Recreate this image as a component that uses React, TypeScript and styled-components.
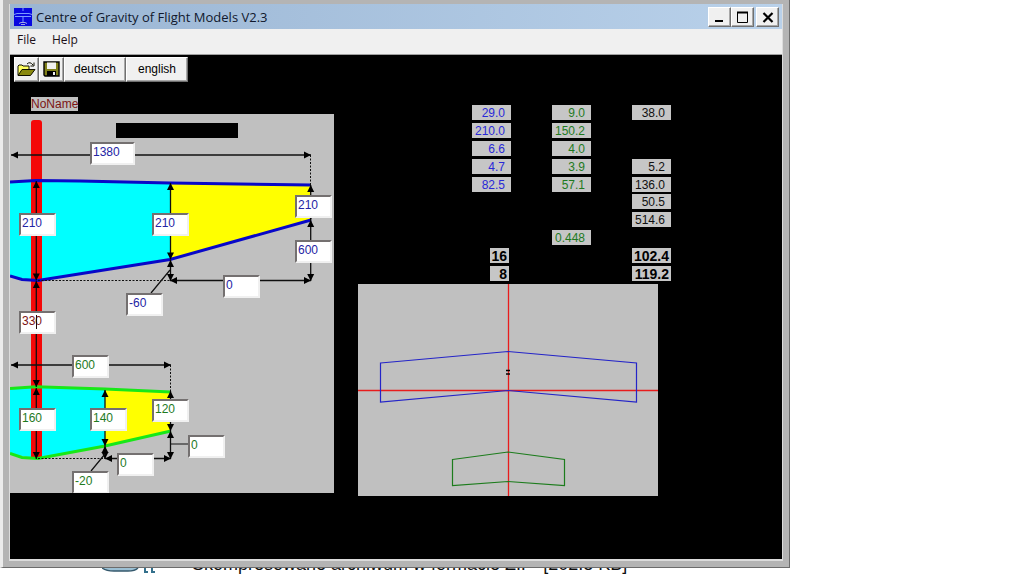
import React from 'react';
import styled, { createGlobalStyle, css } from 'styled-components';

const GlobalStyle = createGlobalStyle`
  * { box-sizing: border-box; }
  body {
    margin: 0;
    background: #ffffff;
    font-family: "Liberation Sans", Arial, sans-serif;
    font-size: 12px;
    overflow-x: hidden;
  }
`;

const palette = {
  blue: '#2424a4',
  brightBlue: '#2828d8',
  green: '#1e7a1e',
  maroon: '#7c1414',
  black: '#000000',
  panel: '#c0c0c0',
};

const Desktop = styled.div`
  display: flex;
  flex-direction: column;
  align-items: stretch;
`;

const Window = styled.main`
  width: calc(100% - 234px);
  min-width: 700px;
  padding: 4px 6px 6px;
  background: #b4b4b4;
  border: 0 solid #6c6c6c;
  border-width: 0 1px 1px 3px;
  border-left-color: #ececec;
`;

const WindowInner = styled.div`
  border: 1px solid #dcdcdc;
  border-top-width: 0;
  border-bottom-width: 2px;
`;

const TitleBar = styled.header`
  display: flex;
  align-items: center;
  height: 25px;
  padding: 0 3px 0 4px;
  background: linear-gradient(90deg, #9ab5d3, #b9d1ea);
`;

const Title = styled.h1`
  flex: 1;
  margin: 0 0 0 4px;
  font: 400 13px/20px "Open Sans", "Noto Sans", sans-serif;
  color: #10182c;
  white-space: nowrap;
`;

const raised = css`
  border: 1px solid;
  border-color: #ffffff #707070 #707070 #ffffff;
  box-shadow: inset -1px -1px 0 #a8a8a8;
  background: #f0f0f0;
`;

const CaptionButtons = styled.div`
  display: flex;
`;

const CaptionButton = styled.button<{ $apart?: boolean }>`
  ${raised}
  display: grid;
  place-items: center;
  width: 23px;
  height: 20px;
  padding: 0;
  margin-left: ${p => (p.$apart ? '2px' : '0')};
`;

const MenuBar = styled.nav`
  display: flex;
  gap: 2px;
  height: 26px;
  padding: 0 0 3px;
  background: #f0f0f0;
  border-bottom: 1px solid #a0a0a0;
`;

const MenuItem = styled.button`
  border: 0;
  padding: 0 7px;
  background: transparent;
  color: #1c1018;
  font: 400 12px/20px "Open Sans", "Noto Sans", sans-serif;
`;

const Client = styled.div`
  display: grid;
  grid-template-columns: 348px 1fr;
  align-items: start;
  min-height: 504px;
  background: #000000;
`;

const Planform = styled.section`
  display: flex;
  flex-direction: column;
  align-items: flex-start;
  padding-top: 2px;
`;

const Toolbar = styled.div`
  display: flex;
  margin-left: 4px;
`;

const ToolButton = styled.button<{ $wide?: boolean }>`
  ${raised}
  display: grid;
  place-items: center;
  width: ${p => (p.$wide ? '62px' : '25px')};
  height: 25px;
  padding: 0 0 1px;
  color: #000000;
  font: 400 12px/16px "Liberation Sans", Arial, sans-serif;
`;

const ModelName = styled.span`
  margin: 15px 0 3px 21px;
  height: 14px;
  line-height: 15px;
  background: ${palette.panel};
  color: ${palette.maroon};
`;

const DrawingPanel = styled.div`
  position: relative;
  width: 324px;
  height: 379px;
  background: ${palette.panel};
  overflow: hidden;
`;

const Drawing = styled.svg`
  display: block;
`;

const FieldBox = styled.label<{ $x: number; $y: number; $struck?: boolean }>`
  position: absolute;
  left: ${p => p.$x}px;
  top: ${p => p.$y}px;
  ${p => p.$struck && css`
    &::after {
      content: '';
      position: absolute;
      left: 17px;
      top: 4px;
      width: 1px;
      height: 14px;
      background: #200808;
    }
  `}
`;

const FieldInput = styled.input<{ $wide?: boolean; $color: string }>`
  display: block;
  width: ${p => (p.$wide ? '45px' : '37px')};
  height: 23px;
  padding: 0 0 3px 1px;
  border: 2px solid;
  border-color: #747070 #f0f0f0 #f0f0f0 #747070;
  border-radius: 0;
  background: #ffffff;
  color: ${p => p.$color};
  font: 400 12px/16px "Liberation Sans", Arial, sans-serif;
`;

const Results = styled.section`
  display: flex;
  flex-direction: column;
  align-items: flex-start;
  padding-top: 50px;
`;

const ResultTable = styled.table`
  width: 199px;
  height: 179px;
  margin-left: 114px;
  table-layout: fixed;
  border-collapse: collapse;
`;

const ResultCell = styled.td<{ $last?: boolean }>`
  width: ${p => (p.$last ? '39px' : '80px')};
  padding: 0;
  vertical-align: top;
`;

const Value = styled.span<{ $color: string; $bold?: boolean; $short?: boolean }>`
  display: block;
  width: ${p => (p.$short ? '19px' : '39px')};
  height: 15px;
  margin-left: ${p => (p.$short ? '18px' : '0')};
  padding-right: ${p => (p.$bold ? '2px' : '6px')};
  background: #c6c6c6;
  color: ${p => p.$color};
  font-size: ${p => (p.$bold ? '14px' : '12px')};
  font-weight: ${p => (p.$bold ? 700 : 400)};
  line-height: 16px;
  text-align: right;
`;

const PlanView = styled.div`
  width: 300px;
  height: 212px;
  background: ${palette.panel};
`;

const PageBehind = styled.footer`
  display: flex;
  align-items: flex-end;
  height: 8px;
  padding-left: 102px;
  overflow: hidden;
`;

const ArchiveNote = styled.p`
  margin: 0 0 0 34px;
  color: #101010;
  font: 400 18px/24px "Liberation Sans", Arial, sans-serif;
  white-space: nowrap;
`;

type Dir = 'up' | 'down' | 'left' | 'right';

function Head({ x, y, dir }: { x: number; y: number; dir: Dir }) {
  const turn = { up: 0, right: 90, down: 180, left: 270 }[dir];
  return <path d="M0 0 L3.5 7 H-3.5 Z" transform={`translate(${x} ${y}) rotate(${turn})`} />;
}

function Dimension({ x1, y1, x2, y2 }: { x1: number; y1: number; x2: number; y2: number }) {
  const vertical = x1 === x2;
  return (
    <g>
      <path d={`M${x1} ${y1} L${x2} ${y2}`} stroke="#101010" strokeWidth="1.3" />
      <Head x={x1} y={y1} dir={vertical ? 'up' : 'left'} />
      <Head x={x2} y={y2} dir={vertical ? 'down' : 'right'} />
    </g>
  );
}

interface FieldSpec {
  label: string;
  value: string;
  x: number;
  y: number;
  color: string;
  wide?: boolean;
  struck?: boolean;
}

const fields: FieldSpec[] = [
  { label: 'Wing span', value: '1380', x: 80, y: 28, color: palette.blue, wide: true },
  { label: 'Wing root chord', value: '210', x: 9, y: 99, color: palette.blue },
  { label: 'Wing middle chord', value: '210', x: 142, y: 99, color: palette.blue },
  { label: 'Wing tip chord', value: '210', x: 285, y: 81, color: palette.blue },
  { label: 'Wing tip sweep', value: '600', x: 285, y: 126, color: palette.blue },
  { label: 'Outer wing panel', value: '0', x: 213, y: 161, color: palette.blue },
  { label: 'Wing middle sweep', value: '-60', x: 116, y: 179, color: palette.blue },
  { label: 'Tail distance', value: '330', x: 9, y: 197, color: palette.maroon, struck: true },
  { label: 'Tail span', value: '600', x: 62, y: 241, color: palette.green },
  { label: 'Tail root chord', value: '160', x: 9, y: 294, color: palette.green },
  { label: 'Tail middle chord', value: '140', x: 80, y: 294, color: palette.green },
  { label: 'Tail tip chord', value: '120', x: 142, y: 285, color: palette.green },
  { label: 'Tail tip sweep', value: '0', x: 178, y: 321, color: palette.green },
  { label: 'Outer tail panel', value: '0', x: 107, y: 339, color: palette.green },
  { label: 'Tail middle sweep', value: '-20', x: 62, y: 357, color: palette.green },
];

type Row = [string, string, string];

const rows: Row[] = [
  ['29.0', '9.0', '38.0'],
  ['210.0', '150.2', ''],
  ['6.6', '4.0', ''],
  ['4.7', '3.9', '5.2'],
  ['82.5', '57.1', '136.0'],
  ['', '', '50.5'],
  ['', '', '514.6'],
  ['', '0.448', ''],
  ['16', '', '102.4'],
  ['8', '', '119.2'],
];

const columnColors = [palette.brightBlue, palette.green, '#101010'];

function AppIcon() {
  return (
    <svg width="18" height="18" viewBox="0 0 18 18" aria-hidden="true">
      <rect width="18" height="18" fill="#0808e0" />
      <path d="M0 6.5 L3 5.5 H15 L18 6.5 M1 8.5 H17 M9 0 V3 M9 8 V15" fill="none" stroke="#7c9cff" />
      <path d="M5 15.5 L7 14.5 H11 L13 15.5 M7 16.5 H11" fill="none" stroke="#a0a8e0" />
    </svg>
  );
}

function OpenIcon() {
  return (
    <svg width="19" height="16" viewBox="0 0 19 16" aria-hidden="true">
      <path d="M1 14 V5 L2 4 H5 L6 5 H12 V8" fill="#ffff60" stroke="#101000" />
      <path d="M1 14.5 L5 8.5 H18 L13.5 14.5 Z" fill="#8a8a10" stroke="#101000" />
      <path d="M10 3 Q13 0 16 4 M17 1.5 V5 H13.5" fill="none" stroke="#101000" />
    </svg>
  );
}

function SaveIcon() {
  return (
    <svg width="17" height="16" viewBox="0 0 17 16" aria-hidden="true">
      <path d="M1 1 H16 V15 H2 L1 14 Z" fill="#80801a" stroke="#000000" strokeWidth="1.4" />
      <rect x="4" y="1.5" width="9" height="6.5" fill="#f0f0f0" />
      <rect x="4" y="10" width="9" height="5" fill="#000000" />
      <rect x="10" y="11" width="2" height="3" fill="#f0f0f0" />
    </svg>
  );
}

function PlanformDrawing() {
  return (
    <Drawing width="325" height="379" viewBox="10 114 325 379" aria-hidden="true">
      <path d="M10 182 L36 181 L170 183 V260 L36 281 L10 276 Z" fill="#00ffff" />
      <path d="M170 183 L311 185 V220 L170 260 Z" fill="#ffff00" />
      <path d="M10 388 L36 387 L105 389 V446 L36 458 L10 454 Z" fill="#00ffff" />
      <path d="M105 389 L171 392 V431 L105 446 Z" fill="#ffff00" />
      <path d="M31 458 V123 Q31 120 34 120 H39 Q42 120 42 123 V458 Z" fill="#f40808" />
      <rect x="116" y="123" width="122" height="15" />
      <g fill="none" strokeWidth="3">
        <path d="M10 182 L36 180.5 L80 181 L170 183 L311 185" stroke="#0808c8" />
        <path d="M10 276 L22 279.5 L38 280.5 L170 259.5 L311 220" stroke="#0808c8" />
        <path d="M10 388.5 L36 386.8 L105 389 L171 392" stroke="#18e818" />
        <path d="M10 453.5 L22 457.5 L38 458.5 L105 446 L171 431" stroke="#18e818" />
      </g>
      <g fill="none" stroke="#101010" strokeDasharray="2 1.5">
        <path d="M38 280.5 H170" />
        <path d="M310.5 155 V185" />
        <path d="M38 458.5 H105" />
        <path d="M170.5 365 V391" />
      </g>
      <Dimension x1={11} y1={155} x2={311} y2={155} />
      <Dimension x1={170} y1={280.5} x2={311} y2={280.5} />
      <Dimension x1={36.3} y1={181} x2={36.3} y2={280.5} />
      <Dimension x1={170.5} y1={183} x2={170.5} y2={259.5} />
      <Dimension x1={170.5} y1={260} x2={170.5} y2={281} />
      <Dimension x1={310.7} y1={185} x2={310.7} y2={220} />
      <Dimension x1={310.7} y1={220} x2={310.7} y2={281} />
      <Dimension x1={36.3} y1={281} x2={36.3} y2={387} />
      <Dimension x1={36.3} y1={388} x2={36.3} y2={459} />
      <Dimension x1={11} y1={365} x2={171} y2={365} />
      <Dimension x1={105} y1={390} x2={105} y2={446} />
      <Dimension x1={105} y1={446} x2={105} y2={459} />
      <Dimension x1={105} y1={458.5} x2={171} y2={458.5} />
      <Dimension x1={170.5} y1={391} x2={170.5} y2={431} />
      <Dimension x1={170.5} y1={431} x2={170.5} y2={459} />
      <path d="M151 293 L170 270 M91 471 L105 454 M171 444 H188" fill="none" stroke="#101010" strokeWidth="1.2" />
    </Drawing>
  );
}

function PlanViewDrawing() {
  return (
    <Drawing width="300" height="212" viewBox="0 0 300 212" role="img" aria-label="Plan view with centre of gravity">
      <path d="M0 106.5 H300 M150.5 0 V212" stroke="#e81c1c" strokeWidth="1.3" />
      <g fill="none" strokeWidth="1.2">
        <path d="M22.5 79 L150 67.5 L278.5 79 V118 L150 106.5 L22.5 118 Z" stroke="#2424c8" />
        <path d="M94.5 175.5 L150 168 L206.5 175.5 V201.5 L150 197.5 L94.5 201.5 Z" stroke="#1c7c1c" />
      </g>
      <path d="M148 86.5 H152 M148 90 H152" stroke="#000000" strokeWidth="1.3" />
    </Drawing>
  );
}

export default function App() {
  return (
    <Desktop>
      <GlobalStyle />
      <Window>
        <WindowInner>
          <TitleBar>
            <AppIcon />
            <Title>Centre of Gravity of Flight Models V2.3</Title>
            <CaptionButtons>
              <CaptionButton aria-label="Minimize">
                <svg width="13" height="12" viewBox="0 0 13 12"><path d="M2 10 H10" stroke="#000" strokeWidth="2" /></svg>
              </CaptionButton>
              <CaptionButton aria-label="Maximize">
                <svg width="13" height="12" viewBox="0 0 13 12"><path d="M1 1.5 H12" stroke="#000" strokeWidth="2" /><path d="M1.5 1 V11.5 H11.5 V1" fill="none" stroke="#000" /></svg>
              </CaptionButton>
              <CaptionButton aria-label="Close" $apart>
                <svg width="12" height="12" viewBox="0 0 12 12"><path d="M1.5 2 L10.5 11 M10.5 2 L1.5 11" stroke="#000" strokeWidth="2.2" /></svg>
              </CaptionButton>
            </CaptionButtons>
          </TitleBar>
          <MenuBar>
            <MenuItem>File</MenuItem>
            <MenuItem>Help</MenuItem>
          </MenuBar>
          <Client>
            <Planform>
              <Toolbar>
                <ToolButton aria-label="Open"><OpenIcon /></ToolButton>
                <ToolButton aria-label="Save"><SaveIcon /></ToolButton>
                <ToolButton $wide>deutsch</ToolButton>
                <ToolButton $wide>english</ToolButton>
              </Toolbar>
              <ModelName>NoName</ModelName>
              <DrawingPanel>
                <PlanformDrawing />
                {fields.map(f => (
                  <FieldBox key={f.label} $x={f.x} $y={f.y} $struck={f.struck}>
                    <FieldInput aria-label={f.label} defaultValue={f.value} $color={f.color} $wide={f.wide} />
                  </FieldBox>
                ))}
              </DrawingPanel>
            </Planform>
            <Results>
              <ResultTable>
                <tbody>
                  {rows.map((row, r) => (
                    <tr key={r}>
                      {row.map((text, c) => {
                        const bold = r >= 8;
                        return (
                          <ResultCell key={c} $last={c === 2}>
                            {text && (
                              <Value $color={bold ? '#000000' : columnColors[c]} $bold={bold} $short={bold && c === 0}>
                                {text}
                              </Value>
                            )}
                          </ResultCell>
                        );
                      })}
                    </tr>
                  ))}
                </tbody>
              </ResultTable>
              <PlanView>
                <PlanViewDrawing />
              </PlanView>
            </Results>
          </Client>
        </WindowInner>
      </Window>
      <PageBehind>
        <svg width="56" height="8" viewBox="0 0 56 8" aria-hidden="true">
          <path d="M0 0 Q4 3 12 3 H26 Q33 3 36 0" fill="#9cc0d4" stroke="#34586c" strokeWidth="1.4" />
          <path d="M43 0 V3.5 M42 4 H46 M50 0 V3.5 M49 4 H53" stroke="#34708c" strokeWidth="2" />
        </svg>
        <ArchiveNote>Skompresowane archiwum w formacie ZIP{'\u00a0 '}[202.8 KB]</ArchiveNote>
      </PageBehind>
    </Desktop>
  );
}
